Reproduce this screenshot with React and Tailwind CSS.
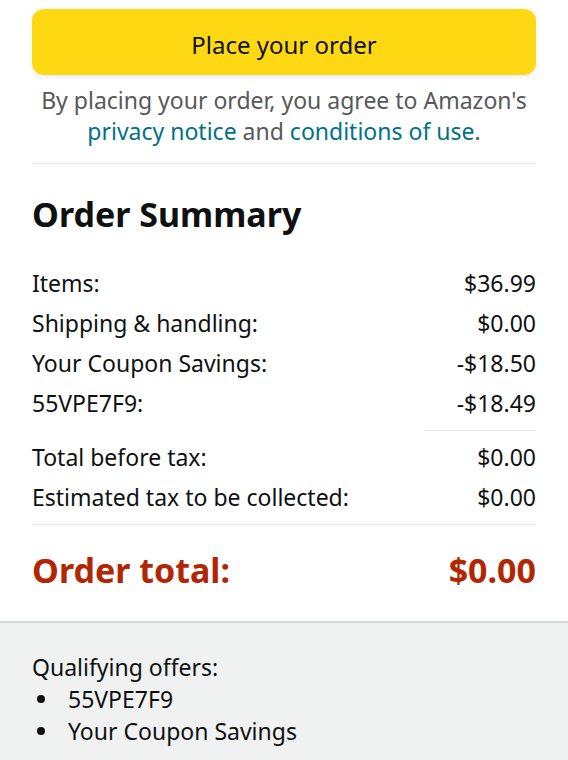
import React from "react";

const rows = [
    { label: "Items:", value: "$36.99" },
    { label: "Shipping & handling:", value: "$0.00" },
    { label: "Your Coupon Savings:", value: "-$18.50" },
    { label: "55VPE7F9:", value: "-$18.49" },
];

const taxRows = [
    { label: "Total before tax:", value: "$0.00" },
    { label: "Estimated tax to be collected:", value: "$0.00" },
];

const offers = ["55VPE7F9", "Your Coupon Savings"];

function Row({ label, value }) {
    return (
        <div className="flex justify-between h-10 items-center">
            <span>{label}</span>
            <span>{value}</span>
        </div>
    );
}

function App() {
    return (
        <div
            className="w-[568px] min-h-[760px] bg-white text-[#0f1111] text-[23px]"
            style={{ fontFamily: '"Noto Sans", "Open Sans", sans-serif' }}
        >
            <div className="px-8 pt-[9px]">
                <button className="w-full h-[66px] pt-[5px] rounded-xl bg-[#ffd814] shadow-[0_2px_5px_rgba(213,217,217,0.5)] text-[24px] text-[#0f1111]">
                    Place your order
                </button>
                <p className="mt-[10px] text-center text-[#565959] leading-[31px]">
                    By placing your order, you agree to Amazon's{" "}
                    <a className="text-[#007185]">privacy notice</a> and{" "}
                    <a className="text-[#007185]">conditions of use</a>.
                </p>
                <div className="mt-4 border-t border-[#e7e7e7]" />

                <h1 className="mt-[30px] text-[34px] font-bold leading-10">
                    Order Summary
                </h1>

                <div className="mt-[29px]">
                    {rows.map((r) => (
                        <Row key={r.label} {...r} />
                    ))}
                </div>
                <div className="flex justify-end mt-[7px]">
                    <div className="w-28 border-t border-[#e7e7e7]" />
                </div>
                <div className="mt-[6px]">
                    {taxRows.map((r) => (
                        <Row key={r.label} {...r} />
                    ))}
                </div>
                <div className="mt-[7px] border-t border-[#e7e7e7]" />

                <div className="flex justify-between pt-[25px] pb-[31px] leading-10 text-[34px] font-bold text-[#b12704]">
                    <span>Order total:</span>
                    <span>$0.00</span>
                </div>
            </div>

            <div className="border-t-2 border-[#d5d9d9] bg-[#f0f2f2] px-8 pt-7 pb-6 leading-8">
                <p>Qualifying offers:</p>
                <ul>
                    {offers.map((o) => (
                        <li key={o} className="flex items-center">
                            <span className="ml-[5px] mr-[23px] w-2 h-2 rounded-full bg-[#0f1111]" />
                            {o}
                        </li>
                    ))}
                </ul>
            </div>
        </div>
    );
}

export default App;
